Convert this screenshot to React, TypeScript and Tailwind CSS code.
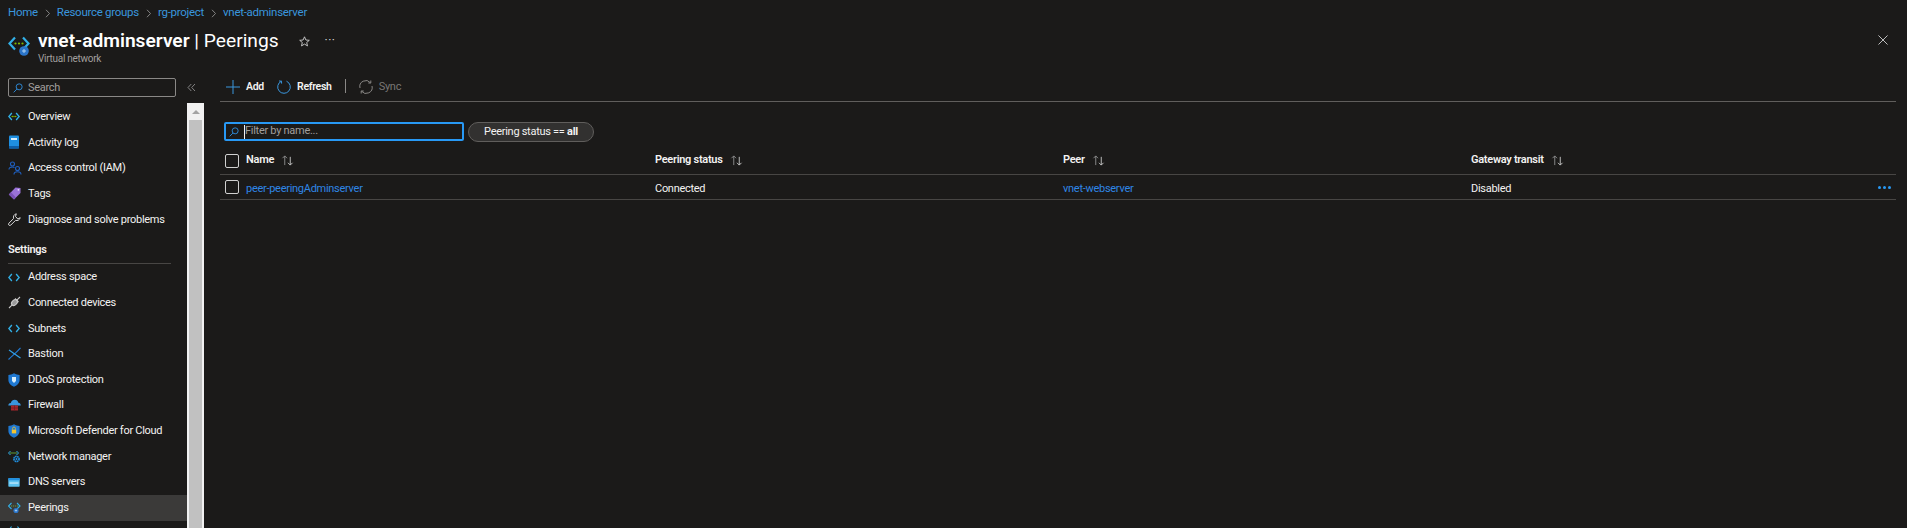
const Font = "[font-family:'Roboto','Noto_Sans',sans-serif]";

const Code = ({ c = "#32b0e7" }: { c?: string }) => (
  <svg width="12" height="9" viewBox="0 0 14 10" fill="none">
    <path d="M4.5 1 L1 5 L4.5 9" stroke={c} strokeWidth="1.6" />
    <path d="M9.5 1 L13 5 L9.5 9" stroke={c} strokeWidth="1.6" />
  </svg>
);

const Vnet = () => (
  <svg width="12" height="9" viewBox="0 0 14 10" fill="none">
    <path d="M4.5 1 L1 5 L4.5 9" stroke="#32b0e7" strokeWidth="1.6" />
    <path d="M9.5 1 L13 5 L9.5 9" stroke="#32b0e7" strokeWidth="1.6" />
    <circle cx="5" cy="5" r="0.9" fill="#7fba00" />
    <circle cx="7" cy="5" r="0.9" fill="#7fba00" />
    <circle cx="9" cy="5" r="0.9" fill="#7fba00" />
  </svg>
);

const ActivityLog = () => (
  <svg width="12" height="14" viewBox="0 0 12 14">
    <rect x="1" y="0.5" width="10" height="13" rx="1" fill="#1f8fe0" />
    <rect x="1" y="11" width="10" height="2.5" fill="#0f5fa8" />
    <rect x="3" y="3" width="6" height="2" fill="#d8eefb" />
  </svg>
);

const People = () => (
  <svg width="14" height="14" viewBox="0 0 14 14" fill="none" stroke="#1f5fbf" strokeWidth="1.1">
    <circle cx="4.5" cy="3" r="2" />
    <path d="M1 8.5 C1 6.5 3 6 4.5 6 C5.5 6 6 6.2 6.5 6.6" />
    <circle cx="9.5" cy="7.5" r="2" />
    <path d="M6 13.5 C6 11.5 8 10.8 9.5 10.8 C11 10.8 13 11.5 13 13.5" />
  </svg>
);

const Tag = () => (
  <svg width="13" height="13" viewBox="0 0 13 13">
    <path d="M7.5 0.5 L12.5 1 L12.5 6 L6 12.5 L0.8 7.4 Z" fill="#9a72d8" />
    <path d="M0.8 7.4 L6 12.5 L8 10.5 L3 5.2 Z" fill="#7a52b8" />
    <circle cx="10.4" cy="2.8" r="0.9" fill="#e6dcf6" />
  </svg>
);

const Wrench = () => (
  <svg width="13" height="13" viewBox="0 0 13 13" fill="none" stroke="#d6d6d6" strokeWidth="1">
    <path d="M8.3 0.8 A3.6 3.6 0 0 0 5.6 5.5 L0.9 10.2 A1.3 1.3 0 0 0 2.8 12.1 L7.5 7.4 A3.6 3.6 0 0 0 12.2 4.7 L9.8 6 L7.5 3.5 Z" />
  </svg>
);

const Plug = () => (
  <svg width="13" height="13" viewBox="0 0 13 13" fill="none" stroke="#c8c8c8" strokeWidth="1.1">
    <ellipse cx="6.5" cy="6.5" rx="2.4" ry="3.4" transform="rotate(45 6.5 6.5)" fill="#9a9a9a" />
    <path d="M1 12 L4.4 8.6 M8.6 4.4 L12 1 M7 2.5 L10.5 6" />
  </svg>
);

const Bastion = () => (
  <svg width="13" height="13" viewBox="0 0 13 13" fill="none">
    <path d="M0.5 12.5 C4 9 8 6 12.5 0.8" stroke="#1f78d1" strokeWidth="1.2" />
    <path d="M1 3 C4 5 8 8 12.5 11" stroke="#32a0e7" strokeWidth="1.2" />
  </svg>
);

const Shield = ({ inner }: { inner: "ddos" | "lock" }) => (
  <svg width="12" height="14" viewBox="0 0 12 14">
    <path d="M6 0.3 C8 1.6 9.8 2 11.6 2 L11.6 7 C11.6 10.4 8.8 12.6 6 13.7 C3.2 12.6 0.4 10.4 0.4 7 L0.4 2 C2.2 2 4 1.6 6 0.3 Z" fill="#1f78d1" />
    {inner === "ddos" ? (
      <path d="M4 4 H8 V8 L6 10 L4 8 Z" fill="#d8eefb" />
    ) : (
      <>
        <rect x="3.8" y="5.6" width="4.4" height="3.8" fill="#f4c430" />
        <path d="M4.6 5.6 V4.4 A1.4 1.4 0 0 1 7.4 4.4 V5.6" fill="none" stroke="#f4c430" strokeWidth="0.8" />
      </>
    )}
  </svg>
);

const Firewall = () => (
  <svg width="13" height="12" viewBox="0 0 13 12">
    <path d="M0.3 6.5 C0.3 4.8 1.6 4 2.8 4 C3.4 1.8 5 0.8 6.7 0.8 C8.6 0.8 10 2 10.4 3.8 C11.8 3.9 12.8 5 12.8 6.5 Z" fill="#3a96dd" />
    <rect x="3" y="6.5" width="7" height="5" fill="#a4262c" />
    <path d="M6.5 6.5 V11.5 M3 9 H10" stroke="#6e1a1e" strokeWidth="0.7" />
  </svg>
);

const NetworkManager = () => (
  <svg width="13" height="13" viewBox="0 0 13 13" fill="none">
    <path d="M2.5 1 L0.5 3 L2.5 5" stroke="#32b0e7" strokeWidth="1" />
    <path d="M8.5 1 L10.5 3 L8.5 5" stroke="#32b0e7" strokeWidth="1" />
    <path d="M2 3 H9" stroke="#5e9c3a" strokeWidth="1" />
    <circle cx="8.5" cy="9" r="2.6" stroke="#1f8fe0" strokeWidth="1.6" strokeDasharray="1.6 0.5" />
    <circle cx="8.5" cy="9" r="1" fill="#1f8fe0" />
  </svg>
);

const Dns = () => (
  <svg width="12" height="9" viewBox="0 0 13 10">
    <rect x="0.2" y="0.2" width="12.6" height="9.6" rx="0.8" fill="#5ec3f0" />
    <rect x="0.2" y="0.2" width="12.6" height="2.4" fill="#1f8fe0" />
    <rect x="1.5" y="5" width="10" height="1.2" fill="#d8f1fc" />
  </svg>
);

const Peering = () => (
  <svg width="13" height="13" viewBox="0 0 13 13" fill="none">
    <path d="M3.5 2 L0.5 5 L3.5 8" stroke="#32b0e7" strokeWidth="1.1" />
    <path d="M9 2 L12 5 L9 8" stroke="#32b0e7" strokeWidth="1.1" />
    <path d="M3 5 H10" stroke="#6ea63a" strokeWidth="0.9" strokeDasharray="1.2 0.8" />
    <circle cx="8" cy="9.5" r="2.6" fill="#2a74c9" />
    <path d="M6.8 9.5 H9.2 M8 8.3 V10.7" stroke="#b9daf5" strokeWidth="0.7" />
  </svg>
);

// only the top of this one shows above the window edge
const NextItem = () => (
  <svg width="13" height="14" viewBox="0 0 13 14" fill="none">
    <path d="M3.5 0.5 L1 4 L3.5 7.5" stroke="#32b0e7" strokeWidth="1.1" />
    <path d="M9.5 0.5 L12 4 L9.5 7.5" stroke="#32b0e7" strokeWidth="1.1" />
  </svg>
);

const Search = () => (
  <svg width="10" height="10" viewBox="0 0 12 12" fill="none" stroke="#2f8fe0" strokeWidth="1.1">
    <circle cx="7.4" cy="4.6" r="3.6" />
    <path d="M4.7 7.3 L0.8 11.2" />
  </svg>
);

const SortArrows = () => (
  <svg width="13" height="11" viewBox="0 0 14 12" fill="none" strokeWidth="1">
    <path d="M4 11 V1 M1.5 3.5 L4 1 L6.5 3.5" stroke="#8f8f8f" />
    <path d="M10 2 V11 M7.5 8.5 L10 11 L12.5 8.5" stroke="#c8c8c8" />
  </svg>
);

const Checkbox = () => (
  <div className="h-[14px] w-[14px] shrink-0 rounded-[2px] border border-[#d0d0d0]" />
);

const nav = [
  { label: "Overview", icon: <Vnet /> },
  { label: "Activity log", icon: <ActivityLog /> },
  { label: "Access control (IAM)", icon: <People /> },
  { label: "Tags", icon: <Tag /> },
  { label: "Diagnose and solve problems", icon: <Wrench /> },
];

const settings = [
  { label: "Address space", icon: <Code /> },
  { label: "Connected devices", icon: <Plug /> },
  { label: "Subnets", icon: <Code /> },
  { label: "Bastion", icon: <Bastion /> },
  { label: "DDoS protection", icon: <Shield inner="ddos" /> },
  { label: "Firewall", icon: <Firewall /> },
  { label: "Microsoft Defender for Cloud", icon: <Shield inner="lock" /> },
  { label: "Network manager", icon: <NetworkManager /> },
  { label: "DNS servers", icon: <Dns /> },
  { label: "Peerings", icon: <Peering />, active: true },
  { label: "", icon: <NextItem /> },
];

const NavItem = ({ label, icon, active }: { label: string; icon: React.ReactNode; active?: boolean }) => (
  <div className={`flex h-[25.65px] shrink-0 items-center pl-2 text-[#f3f2f1] ${active ? "bg-[#3b3a39]" : ""}`}>
    <span className="flex w-[20px] shrink-0 items-center">{icon}</span>
    <span className="whitespace-nowrap pt-px">{label}</span>
  </div>
);

const columns = ["Name", "Peering status", "Peer", "Gateway transit"];

export default function App() {
  return (
    <div className={`${Font} flex h-[528px] w-[1907px] flex-col overflow-hidden bg-[#1b1a19] text-[11px] tracking-[-0.28px] text-[#f3f2f1]`}>
      <nav className="flex h-[26px] shrink-0 items-center gap-[6px] pl-2 text-[11.5px] text-[#3a96dd]">
        <span>Home</span>
        <Chevron />
        <span>Resource groups</span>
        <Chevron />
        <span>rg-project</span>
        <Chevron />
        <span>vnet-adminserver</span>
      </nav>

      <header className="flex h-[43px] shrink-0 items-start pl-2 pt-[2px]">
        <div className="relative mr-2 mt-[8px] h-[20px] w-[22px] shrink-0">
          <svg width="22" height="16" viewBox="0 0 22 16" fill="none">
            <path d="M7 1.5 L1.5 7.5 L7 13.5" stroke="#32b0e7" strokeWidth="2.2" />
            <path d="M15 1.5 L20.5 7.5 L15 13.5" stroke="#32b0e7" strokeWidth="2.2" />
            <circle cx="7.5" cy="7.5" r="1.1" fill="#7fba00" />
            <circle cx="11" cy="7.5" r="1.1" fill="#7fba00" />
            <circle cx="14.5" cy="7.5" r="1.1" fill="#7fba00" />
          </svg>
          <svg className="absolute bottom-0 left-[11px]" width="10" height="10" viewBox="0 0 10 10">
            <circle cx="5" cy="5" r="4.8" fill="#2a74c9" />
            <path d="M3 5 H7 M5 3 V7" stroke="#b9daf5" strokeWidth="0.9" />
          </svg>
        </div>
        <div className="flex flex-col">
          <h1 className="whitespace-nowrap text-[19.2px] leading-[25px] tracking-normal text-white">
            <span className="font-semibold">vnet-adminserver</span>
            <span> | Peerings</span>
          </h1>
          <span className="text-[10px] leading-[12px] text-[#a19f9d]">Virtual network</span>
        </div>
        <svg className="ml-[20px] mt-[8px]" width="11" height="11" viewBox="0 0 11 11" fill="none" stroke="#d0d0d0" strokeWidth="0.9">
          <path d="M5.5 0.8 L6.9 4 L10.3 4.3 L7.7 6.5 L8.5 9.9 L5.5 8.1 L2.5 9.9 L3.3 6.5 L0.7 4.3 L4.1 4 Z" />
        </svg>
        <span className="ml-[15px] mt-[2px] text-[12px] leading-[20px] tracking-[0.5px] text-[#d0d0d0]">···</span>
        <svg className="ml-auto mr-[19px] mt-[7px]" width="10" height="10" viewBox="0 0 11 11" fill="none" stroke="#d0d0d0" strokeWidth="1">
          <path d="M0.5 0.5 L10.5 10.5 M10.5 0.5 L0.5 10.5" />
        </svg>
      </header>

      <div className="flex min-h-0 flex-1">
        <aside className="flex w-[204px] shrink-0 flex-col">
          <div className="flex h-[34px] shrink-0 items-start pl-2 pt-[9px]">
            <div className="flex h-[19px] w-[168px] items-center gap-[5px] rounded-[2px] border border-[#8a8886] pl-[4px] text-[#a19f9d]">
              <Search />
              <span className="pt-px">Search</span>
            </div>
            <svg className="ml-[11px] mt-[5px]" width="9" height="9" viewBox="0 0 9 9" fill="none" stroke="#8f8f8f" strokeWidth="0.9">
              <path d="M4.3 1 L1 4.5 L4.3 8 M8 1 L4.7 4.5 L8 8" />
            </svg>
          </div>
          <div className="flex min-h-0 flex-1">
            <div className="flex w-[187px] shrink-0 flex-col overflow-hidden pt-px">
              {nav.map((item) => (
                <NavItem key={item.label} {...item} />
              ))}
              <div className="mt-[9px] h-[18px] shrink-0 pl-2 font-semibold leading-[18px]">Settings</div>
              <div className="ml-2 mr-4 mt-[4px] h-px shrink-0 bg-[#484644]" />
              <div className="flex flex-col">
                {settings.map((item, i) => (
                  <NavItem key={i} {...item} />
                ))}
              </div>
            </div>
            <div className="flex w-[17px] shrink-0 flex-col items-center bg-[#f1f1f1]">
              <div className="flex h-[17px] shrink-0 items-center justify-center">
                <div className="h-0 w-0 border-x-[4px] border-b-[4px] border-x-transparent border-b-[#a3a3a3]" />
              </div>
              <div className="w-[13px] flex-1 bg-[#c1c1c1]" />
            </div>
          </div>
        </aside>

        <main className="flex min-w-0 flex-1 flex-col pl-4 pr-[11px]">
          <div className="flex h-[33px] shrink-0 items-start border-b border-[#605e5c] pl-[6px] pt-[9px] text-[10.5px] font-semibold">
            <div className="flex h-[18px] items-center">
              <svg width="14" height="14" viewBox="0 0 14 14" fill="none" stroke="#3a96dd" strokeWidth="1">
                <path d="M7 0 V14 M0 7 H14" />
              </svg>
              <span className="ml-[6px]">Add</span>
            </div>
            <div className="ml-[13px] flex h-[18px] items-center">
              <svg width="14" height="14" viewBox="0 0 14 14" fill="none" stroke="#3a96dd" strokeWidth="1">
                <path d="M4.5 1.2 A6.3 6.3 0 1 0 9.5 1.2" />
                <path d="M4.5 1.2 L2 1 M4.5 1.2 L4.6 3.6" />
              </svg>
              <span className="ml-[6px]">Refresh</span>
            </div>
            <div className="ml-[13px] mt-[1px] h-[14px] w-px bg-[#8a8886]" />
            <div className="ml-[13px] flex h-[18px] items-center text-[11px] font-normal text-[#797775]">
              <svg width="14" height="14" viewBox="0 0 14 14" fill="none" stroke="#8a8886" strokeWidth="1">
                <path d="M1 8 A6 6 0 0 1 11.5 2.8 M13 6 A6 6 0 0 1 2.5 11.2" />
                <path d="M11.8 0.5 V3 H9.3 M2.2 13.5 V11 H4.7" />
              </svg>
              <span className="ml-[6px]">Sync</span>
            </div>
          </div>

          <div className="mt-5 flex shrink-0 items-start pl-[4px]">
            <div className="flex h-[19px] w-[240px] items-center rounded-[2px] border-2 border-[#2899f5] pl-[3px] text-[#a19f9d]">
              <Search />
              <span className="ml-[5px] h-[14px] w-px bg-[#f3f2f1]" />
              <span>Filter by name...</span>
            </div>
            <div className="ml-[4px] flex h-[20px] w-[126px] items-center justify-center rounded-full border border-[#605e5c] bg-[#323130]">
              <span>
                Peering status == <span className="font-bold">all</span>
              </span>
            </div>
          </div>

          <div className="mt-2 grid h-[25px] shrink-0 grid-cols-[435px_408px_408px_1fr] items-center border-b border-[#484644] pb-[3px] font-semibold">
            {columns.map((name, i) => (
              <div key={name} className={`flex items-center ${i === 0 ? "pl-[5px]" : ""}`}>
                {i === 0 && (
                  <span className="mr-[7px]">
                    <Checkbox />
                  </span>
                )}
                <span className="whitespace-nowrap">{name}</span>
                <span className="ml-[7px]">
                  <SortArrows />
                </span>
              </div>
            ))}
          </div>

          <div className="grid h-[25px] shrink-0 grid-cols-[435px_408px_408px_1fr] items-center border-b border-[#484644]">
            <div className="flex items-center pl-[5px]">
              <span className="mr-[7px]">
                <Checkbox />
              </span>
              <span className="mt-[4px] text-[#2f86e6]">peer-peeringAdminserver</span>
            </div>
            <div className="pt-[4px]">Connected</div>
            <div className="pt-[4px] text-[#2f86e6]">vnet-webserver</div>
            <div className="flex items-center justify-between pr-[5px]">
              <span className="mt-[4px]">Disabled</span>
              <span className="flex gap-[2px]">
                <i className="h-[3px] w-[3px] rounded-full bg-[#2899f5]" />
                <i className="h-[3px] w-[3px] rounded-full bg-[#2899f5]" />
                <i className="h-[3px] w-[3px] rounded-full bg-[#2899f5]" />
              </span>
            </div>
          </div>
        </main>
      </div>
    </div>
  );
}

function Chevron() {
  return (
    <svg width="7" height="9" viewBox="0 0 7 9" fill="none" stroke="#8f8f8f" strokeWidth="0.9">
      <path d="M2 0.8 L5.5 4.5 L2 8.2" />
    </svg>
  );
}
